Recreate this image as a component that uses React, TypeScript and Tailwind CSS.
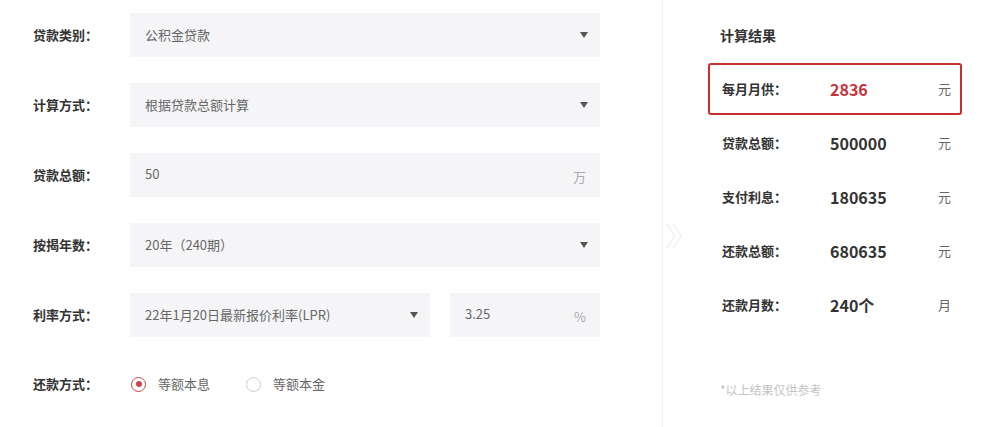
import React from 'react';

const font = { fontFamily: '"Microsoft YaHei", "Noto Sans CJK SC", "Liberation Sans", sans-serif' };

function Arrow() {
  return (
    <svg width="8" height="6" viewBox="0 0 8 6" className="shrink-0">
      <path d="M0 0 L8 0 L4 6 Z" fill="#555" />
    </svg>
  );
}

function Field({ label, children }: { label: string; children: React.ReactNode }) {
  return (
    <div className="flex items-center h-[44px] mb-[26px]">
      <div className="w-[130px] shrink-0 pl-[33px] text-[13px] font-bold text-[#333] whitespace-nowrap">{label}</div>
      {children}
    </div>
  );
}

function SelectBox({ value, width }: { value: string; width: string }) {
  return (
    <div className={`${width} h-[44px] bg-[#f5f5f7] flex items-center justify-between pl-[15px] pr-[12px] text-[13px] text-[#666]`}>
      <span>{value}</span>
      <Arrow />
    </div>
  );
}

function InputBox({ value, unit, width }: { value: string; unit: string; width: string }) {
  return (
    <div className={`${width} h-[44px] bg-[#f5f5f7] flex items-center justify-between pl-[15px] pr-[14px] text-[13px] text-[#666]`}>
      <span className="-mt-[2px]">{value}</span>
      <span className="text-[#aaa] mt-[4px]">{unit}</span>
    </div>
  );
}

function Radio({ checked, label }: { checked?: boolean; label: string }) {
  return (
    <div className="flex items-center gap-[12px] mr-[36px]">
      <div
        className={`size-[15px] rounded-full border flex items-center justify-center ${
          checked ? 'border-[#c8454b]' : 'border-[#ccc]'
        }`}
      >
        {checked && <div className="size-[6px] rounded-full bg-[#c8454b]" />}
      </div>
      <span className="text-[13px] text-[#666]">{label}</span>
    </div>
  );
}

const results = [
  { label: '贷款总额：', value: '500000', unit: '元' },
  { label: '支付利息：', value: '180635', unit: '元' },
  { label: '还款总额：', value: '680635', unit: '元' },
  { label: '还款月数：', value: '240个', unit: '月' },
];

export default function App() {
  return (
    <div className="w-[997px] h-[427px] bg-white flex overflow-hidden" style={font}>
      {/* Form */}
      <div className="w-[662px] shrink-0 pt-[13px]">
        <Field label="贷款类别：">
          <SelectBox value="公积金贷款" width="w-[470px]" />
        </Field>
        <Field label="计算方式：">
          <SelectBox value="根据贷款总额计算" width="w-[470px]" />
        </Field>
        <Field label="贷款总额：">
          <InputBox value="50" unit="万" width="w-[470px]" />
        </Field>
        <Field label="按揭年数：">
          <SelectBox value="20年（240期）" width="w-[470px]" />
        </Field>
        <Field label="利率方式：">
          <div className="flex gap-[20px]">
            <SelectBox value="22年1月20日最新报价利率(LPR)" width="w-[300px]" />
            <InputBox value="3.25" unit="%" width="w-[150px]" />
          </div>
        </Field>
        <div className="flex items-center h-[44px] -mt-[1px]">
          <div className="w-[130px] shrink-0 pl-[33px] text-[13px] font-bold text-[#333] whitespace-nowrap">还款方式：</div>
          <div className="flex items-center pl-px">
            <Radio checked label="等额本息" />
            <Radio label="等额本金" />
          </div>
        </div>
      </div>

      {/* Divider */}
      <div className="relative w-px bg-[#f2f2f2] shrink-0">
        <svg className="absolute left-[2px] top-[222px]" width="20" height="28" viewBox="0 0 20 28">
          <path d="M3 2 L11 14 L3 26" stroke="#f3f3f3" strokeWidth="2" fill="none" />
          <path d="M9 2 L17 14 L9 26" stroke="#f3f3f3" strokeWidth="2" fill="none" />
        </svg>
      </div>

      {/* Results */}
      <div className="flex-1 pl-[45px] pt-[26px]">
        <div className="pl-[12px] text-[14px] font-bold text-[#333] h-[18px] leading-[18px]">计算结果</div>
        <div className="mt-[19px] w-[254px] h-[52px] border-2 border-[#c62f2f] rounded-[3px] flex items-center pl-[12px]">
          <span className="w-[108px] text-[13px] font-bold text-[#333]">每月月供：</span>
          <span className="w-[108px] text-[16px] font-bold text-[#c8333a]">2836</span>
          <span className="text-[13px] text-[#666]">元</span>
        </div>
        <div className="mt-px">
          {results.map((r) => (
            <div key={r.label} className="w-[254px] h-[54px] flex items-center pl-[14px]">
              <span className="w-[108px] text-[13px] font-bold text-[#333]">{r.label}</span>
              <span className="w-[108px] text-[16px] font-bold text-[#333]">{r.value}</span>
              <span className="text-[13px] text-[#666]">{r.unit}</span>
            </div>
          ))}
        </div>
        <div className="mt-[49px] pl-[12px] text-[12px] text-[#c4c4c4]">*以上结果仅供参考</div>
      </div>
    </div>
  );
}
